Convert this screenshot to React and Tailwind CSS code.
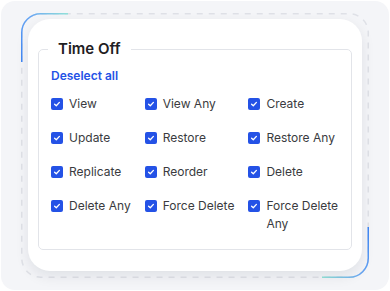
const permissions = [
  'View', 'View Any', 'Create',
  'Update', 'Restore', 'Restore Any',
  'Replicate', 'Reorder', 'Delete',
  'Delete Any', 'Force Delete', 'Force Delete Any',
];

function Check() {
  return (
    <span className="mt-[3px] flex h-3 w-3 shrink-0 items-center justify-center rounded-[2px] bg-[#2452e6]">
      <svg width="8" height="8" viewBox="0 0 8 8" fill="none">
        <path d="M1.6 4.2 L3.3 5.8 L6.4 2.4" stroke="white" strokeWidth="1.3" strokeLinecap="round" strokeLinejoin="round" />
      </svg>
    </span>
  );
}

function Frame() {
  // dashed outline with the two gradient corner accents
  return (
    <svg className="pointer-events-none absolute inset-0" width="348" height="265" viewBox="0 0 348 265" fill="none">
      <defs>
        <linearGradient id="tl" x1="0" y1="49" x2="47" y2="0" gradientUnits="userSpaceOnUse">
          <stop offset="0" stopColor="#3f86f5" />
          <stop offset="0.6" stopColor="#6aa8f3" />
          <stop offset="1" stopColor="#93e3d9" />
        </linearGradient>
        <linearGradient id="br" x1="347" y1="214" x2="301" y2="264" gradientUnits="userSpaceOnUse">
          <stop offset="0" stopColor="#3f86f5" />
          <stop offset="0.6" stopColor="#6aa8f3" />
          <stop offset="1" stopColor="#93e3d9" />
        </linearGradient>
      </defs>
      <rect x="0.75" y="0.75" width="346.5" height="263.5" rx="19" stroke="#dfe1e7" strokeWidth="1.5" strokeDasharray="6 6" />
      <path d="M0.75 49 V19.75 A19 19 0 0 1 19.75 0.75 H47" stroke="url(#tl)" strokeWidth="1.5" />
      <path d="M347.25 214 V245.25 A19 19 0 0 1 328.25 264.25 H301" stroke="url(#br)" strokeWidth="1.5" />
    </svg>
  );
}

export default function App() {
  return (
    <div className="h-[291px] w-[390px] bg-white p-px font-['Inter',sans-serif]">
      <div className="h-[289px] rounded-[14px] bg-[#f4f5f8] px-5 pt-3">
        <div className="relative h-[265px] px-[7px] pt-[6px]">
          <Frame />
          <div className="relative h-[252px] rounded-[22px] bg-white px-[10px] pt-5 shadow-[0_5px_14px_rgba(15,23,42,0.09)]">
            <fieldset className="h-[211px] rounded-[5px] border border-[#e2e4e9] pl-3 pr-2 pt-2">
              <legend className="-ml-[3px] px-2.5 text-[15px] font-semibold leading-5 text-[#1f2023]">Time Off</legend>
              <button className="mb-2.5 block text-[12px] font-semibold leading-[18px] text-[#2452e6]">Deselect all</button>
              <div className="grid grid-cols-[auto_auto_minmax(0,1fr)] gap-x-[14px] gap-y-4">
                {permissions.map(p => (
                  <label key={p} className="flex items-start gap-1.5 text-[12px] leading-[18px] text-[#3a3b40]">
                    <Check />
                    <span>{p}</span>
                  </label>
                ))}
              </div>
            </fieldset>
          </div>
        </div>
      </div>
    </div>
  );
}
